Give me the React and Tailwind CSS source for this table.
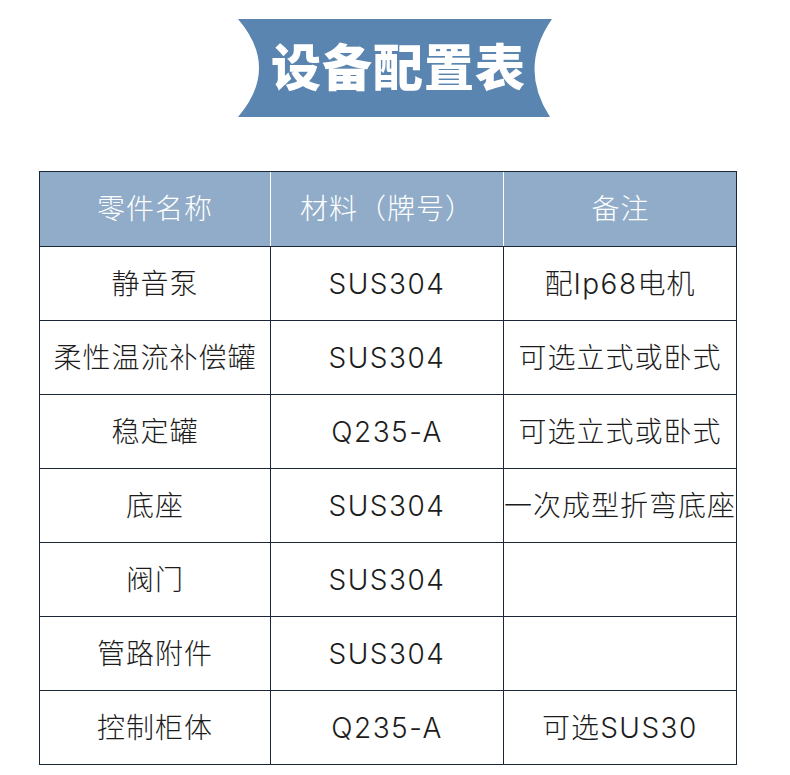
const rows = [
  ['静音泵', 'SUS304', '配Ip68电机'],
  ['柔性温流补偿罐', 'SUS304', '可选立式或卧式'],
  ['稳定罐', 'Q235-A', '可选立式或卧式'],
  ['底座', 'SUS304', '一次成型折弯底座'],
  ['阀门', 'SUS304', ''],
  ['管路附件', 'SUS304', ''],
  ['控制柜体', 'Q235-A', '可选SUS30'],
];

// latin runs get a touch more tracking so they sit as wide as the reference
function CellText({ text }) {
  const parts = text.split(/([A-Za-z0-9-]+)/).filter(Boolean);
  return (
    <span className="whitespace-nowrap tracking-[1px]">
      {parts.map((p, i) =>
        /^[A-Za-z0-9-]+$/.test(p) ? (
          <span key={i} className="tracking-[1.5px] font-light">{p}</span>
        ) : (
          <span key={i}>{p}</span>
        )
      )}
    </span>
  );
}

function Banner() {
  return (
    <div className="relative mx-auto w-[314px] h-[98px] flex items-center justify-center">
      <svg className="absolute inset-0" width="314" height="98" viewBox="0 0 314 98">
        <path d="M0 0 H314 Q280 49 312 98 H0 Q42 49 0 0 Z" fill="#5a85b0" />
      </svg>
      <span className="relative text-white text-[50px] font-black leading-none tracking-[1px] pl-[7px]">
        设备配置表
      </span>
    </div>
  );
}

export default function App() {
  return (
    <div
      className="w-[790px] h-[775px] bg-white overflow-hidden pt-[19px]"
      style={{ fontFamily: 'Inter, "Noto Sans CJK SC", sans-serif' }}
    >
      <Banner />

      <div className="ml-[39px] mt-[54px] w-[698px] border-l border-t border-[#1a2736]">
        {/* header */}
        <div className="grid grid-cols-[231px_233px_233px] h-[75px] bg-[#90acc8] text-white text-[28px] font-light border-b border-r border-[#1a2736]">
          <div className="flex items-center justify-center border-r border-white"><CellText text="零件名称" /></div>
          <div className="flex items-center justify-center border-r border-white"><CellText text="材料（牌号）" /></div>
          <div className="flex items-center justify-center"><CellText text="备注" /></div>
        </div>

        {rows.map((r, i) => (
          <div key={i} className="grid grid-cols-[231px_233px_233px] h-[74px] text-[28px] font-light text-[#1c1c1c]">
            {r.map((c, j) => (
              <div key={j} className="flex items-center justify-center border-r border-b border-[#1a2736] overflow-visible">
                <CellText text={c} />
              </div>
            ))}
          </div>
        ))}
      </div>
    </div>
  );
}
